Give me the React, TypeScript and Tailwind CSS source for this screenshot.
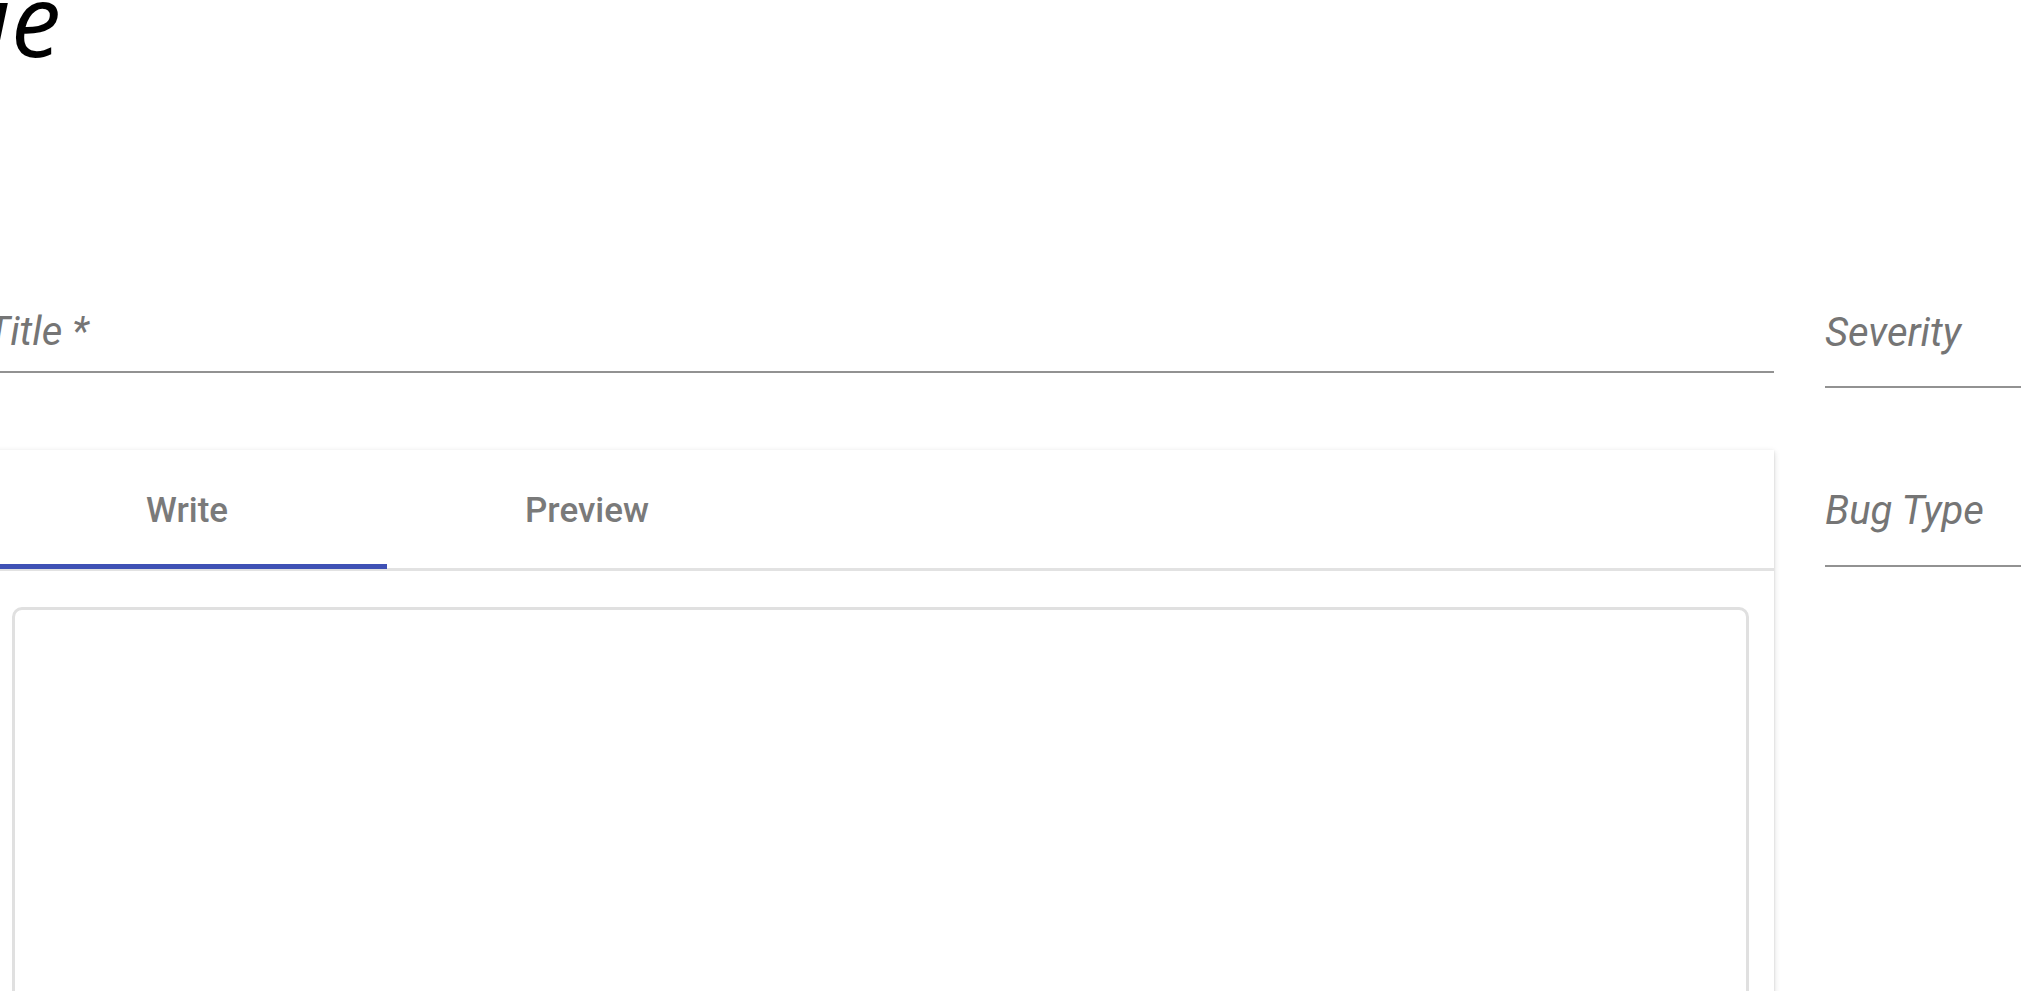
import { useState } from "react";

const tabs = ["Write", "Preview"];

const SelectField = ({ label, className }: { label: string; className?: string }) => (
  <div className={`border-b-2 border-[#929292] ${className ?? ""}`}>
    <div className="font-['Roboto',sans-serif] italic text-[40px] leading-[48px] text-[#757575]">
      {label}
    </div>
  </div>
);

export default function App() {
  const [tab, setTab] = useState(0);

  return (
    <div className="w-full h-[991px] overflow-hidden bg-white">
      <div className="ml-[-13px] w-[2100px]">
        <h1 className="ml-[-147px] mt-[-32px] font-['Open_Sans',sans-serif] italic font-normal text-[100px] leading-none text-black whitespace-nowrap">
          Issue
        </h1>

        <div className="mt-[240px] flex items-start gap-[51px]">
          {/* left column */}
          <div className="w-[1787px] shrink-0 flex flex-col">
            <div className="pb-[15px] border-b-2 border-[#929292]">
              <label className="block font-['Roboto',sans-serif] italic text-[40px] leading-[48px] text-[#757575]">
                Title *
              </label>
            </div>

            <div className="mt-[77px] bg-white shadow-[0_2px_6px_rgba(0,0,0,0.16),0_1px_2px_rgba(0,0,0,0.1)]">
              <div className="relative flex h-[121px] border-b-[3px] border-[#e2e2e2]">
                {tabs.map((t, i) => (
                  <button
                    key={t}
                    onClick={() => setTab(i)}
                    className="relative w-[400px] h-full pt-[4px] flex items-center justify-center font-['Roboto',sans-serif] font-medium text-[35px] text-[#7a7a7a]"
                  >
                    {t}
                    {tab === i && (
                      <span className="absolute left-0 right-0 bottom-[-1px] h-[5px] bg-[#3f51b5]" />
                    )}
                  </button>
                ))}
              </div>
              <div className="px-[25px] pt-[36px]">
                <div className="h-[600px] border-[3px] border-[#e0e0e0] rounded-[10px]" />
              </div>
            </div>
          </div>

          {/* right column */}
          <div className="flex-1 flex flex-col">
            <SelectField label="Severity" className="pb-[29px] mt-[1px]" />
            <SelectField label="Bug Type" className="mt-[99px] pb-[30px]" />
          </div>
        </div>
      </div>
    </div>
  );
}
